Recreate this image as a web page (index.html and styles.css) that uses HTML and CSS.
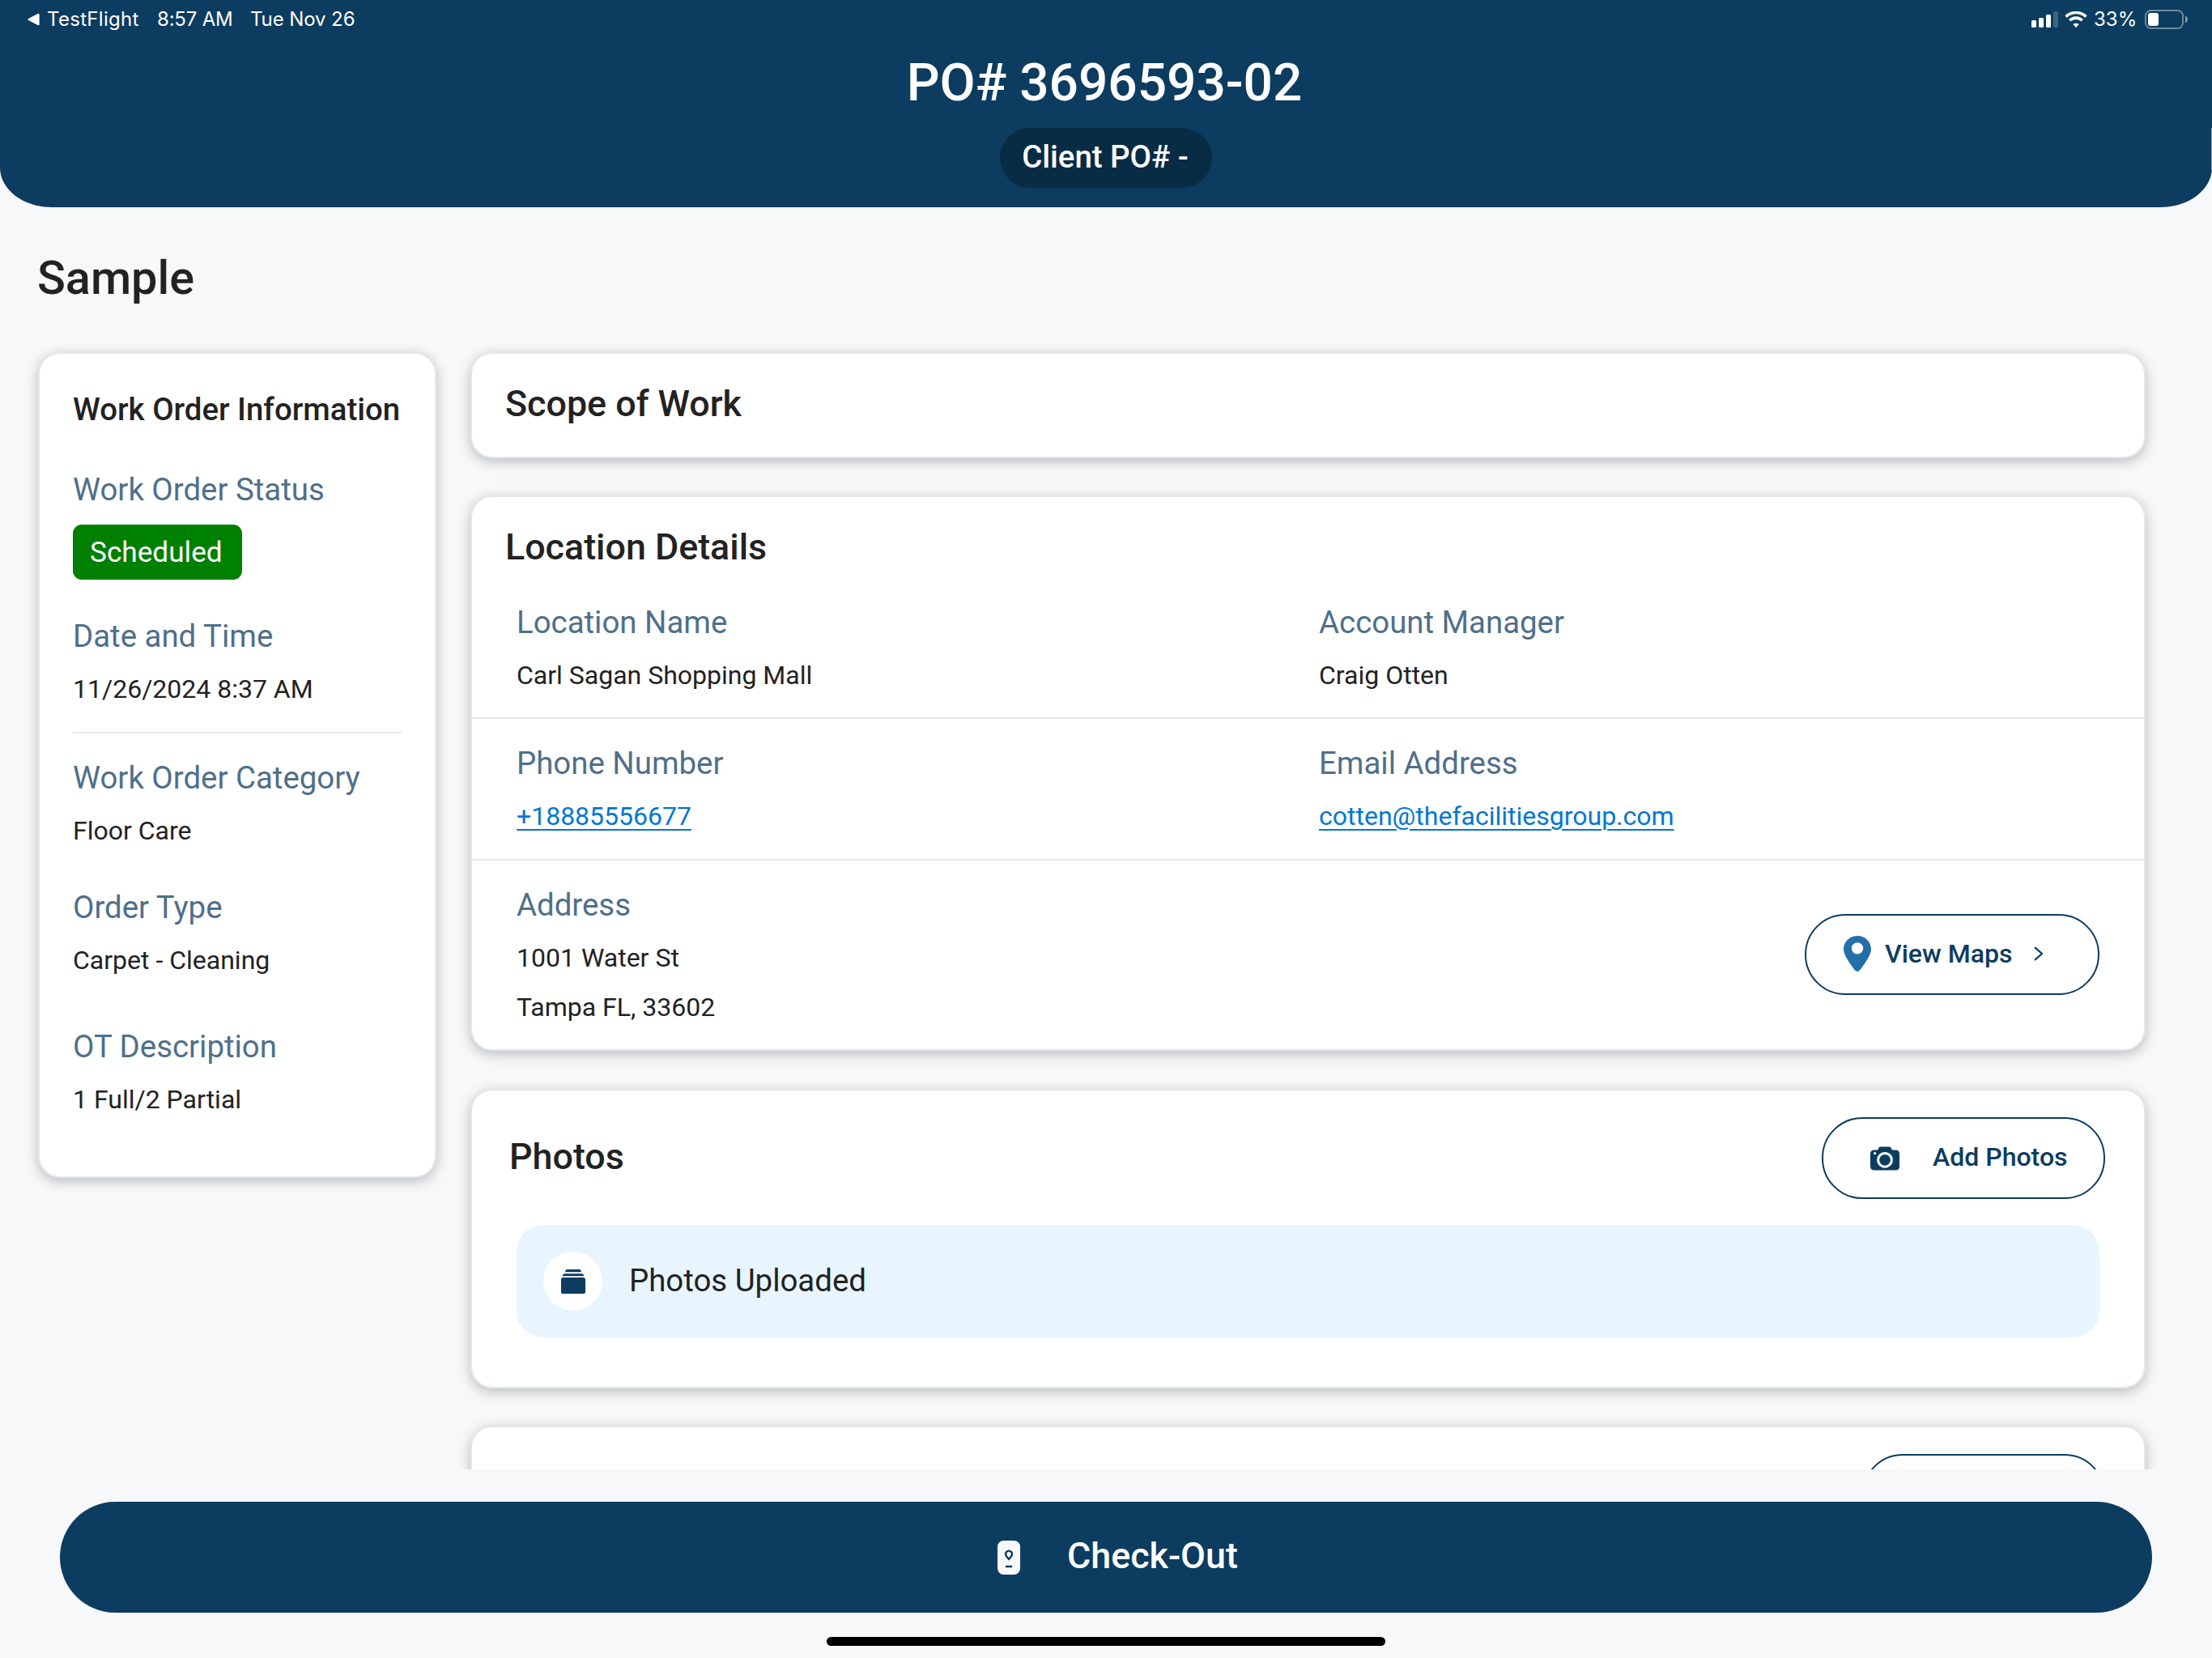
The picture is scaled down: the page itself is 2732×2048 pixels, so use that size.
FILE: index.html
```html
<!DOCTYPE html>
<html lang="en">
<head>
<meta charset="utf-8">
<title>PO# 3696593-02</title>
<link rel="stylesheet" href="styles.css">
</head>
<body>
<div class="app">
  <header class="header">
    <div class="status">
      <div class="status-left">
        <svg class="back" viewBox="0 0 16 16"><path d="M1.200 6.900 13.400.600Q15.600-.200 15.600 2v12q0 2.200-2.200 1.400L1.200 9.100Q-.4 8 1.200 6.900Z" fill="#fff"/></svg>
        <span class="st st-app">TestFlight</span>
        <span class="st st-time">8:57 AM</span>
        <span class="st st-date">Tue Nov 26</span>
      </div>
      <div class="status-right">
        <svg class="signal" viewBox="0 0 33 20" fill="#fff"><rect x="0" y="11" width="6" height="9" rx="1.500"/><rect x="9" y="8" width="6" height="12" rx="1.500"/><rect x="18" y="4" width="6" height="16" rx="1.500"/><rect x="27" y="0" width="6" height="20" rx="1.500" opacity=".2"/></svg>
        <svg class="wifi" viewBox="0 0 28 20" fill="none" stroke="#fff" stroke-width="3.600"><path d="M1.600 6.600a17.800 17.800 0 0 1 24.800 0"/><path d="M6.300 11.300a11 11 0 0 1 15.400 0"/><path d="M14 20l-3.700-3.900a5.400 5.400 0 0 1 7.400 0Z" fill="#fff" stroke="none"/></svg>
        <span class="st st-pct">33%</span>
        <svg class="battery" viewBox="0 0 54 24"><rect x="1" y="1" width="46" height="22" rx="6.500" fill="none" stroke="#fff" stroke-opacity=".4" stroke-width="2"/><rect x="4" y="4" width="13" height="16" rx="3" fill="#fff"/><path d="M50 7.500q3 1.500 3 4.500t-3 4.500Z" fill="#fff" opacity=".5"/></svg>
      </div>
    </div>
    <h1 class="title">PO# 3696593-02</h1>
    <div class="pill"><span>Client PO# -</span></div>
  </header>
  <main class="scroll">
    <h2 class="page-name">Sample</h2>
    <div class="columns">
      <aside class="card info">
        <h3 class="info-title">Work Order Information</h3>
        <div class="field status-field">
          <div class="label">Work Order Status</div>
          <div class="badge">Scheduled</div>
        </div>
        <div class="field date-field">
          <div class="label">Date and Time</div>
          <div class="value">11/26/2024 8:37 AM</div>
        </div>
        <div class="field category-field">
          <div class="label">Work Order Category</div>
          <div class="value">Floor Care</div>
        </div>
        <div class="field type-field">
          <div class="label">Order Type</div>
          <div class="value">Carpet - Cleaning</div>
        </div>
        <div class="field desc-field">
          <div class="label">OT Description</div>
          <div class="value">1 Full/2 Partial</div>
        </div>
      </aside>
      <div class="details">
        <section class="card scope"><h3 class="heading">Scope of Work</h3></section>
        <section class="card location">
          <h3 class="heading">Location Details</h3>
          <div class="row">
            <div class="field"><div class="label">Location Name</div><div class="value">Carl Sagan Shopping Mall</div></div>
            <div class="field"><div class="label">Account Manager</div><div class="value">Craig Otten</div></div>
          </div>
          <div class="row contact">
            <div class="field"><div class="label">Phone Number</div><div class="value"><a class="link">+18885556677</a></div></div>
            <div class="field"><div class="label">Email Address</div><div class="value"><a class="link">cotten@thefacilitiesgroup.com</a></div></div>
          </div>
          <div class="row address">
            <div class="field"><div class="label">Address</div><div class="value">1001 Water St</div><div class="value">Tampa FL, 33602</div></div>
            <div class="btn maps">
              <svg class="pin" viewBox="0 0 34 44"><path fill="#236fa8" fill-rule="evenodd" d="M17 0C7.500 0 0 7.400 0 16.500 0 24 8.500 35 13.800 42.300Q17 45.700 20.200 42.300C25.500 35 34 24 34 16.500 34 7.400 26.500 0 17 0ZM17 8.200a7.200 7.200 0 1 1 0 14.400 7.200 7.200 0 0 1 0-14.400Z"/></svg>
              <span>View Maps</span>
              <svg class="chev" viewBox="0 0 12 18" fill="none" stroke="#0c3c60" stroke-width="2.300" stroke-linecap="round" stroke-linejoin="round"><path d="M1.700 1.700 10 9l-8.300 7.300"/></svg>
            </div>
          </div>
        </section>
        <section class="card photos">
          <div class="photos-head">
            <h3 class="heading">Photos</h3>
            <div class="btn add">
              <svg class="camera" viewBox="0 0 36 30"><path fill="#0c3c60" d="M12.500.4h11q1.400 0 2 1.300l1 2q.5.900 1.500.900h3Q36 4.600 36 9.600v15q0 5-5 5H5q-5 0-5-5v-15q0-5 5-5h3q1.200 0 1.600-.9l.9-2q.6-1.300 2-1.300Z"/><circle cx="18" cy="16.800" r="8.400" fill="none" stroke="#fff" stroke-width="3"/><circle cx="5.600" cy="8.600" r="1.700" fill="#fff"/></svg>
              <span>Add Photos</span>
            </div>
          </div>
          <div class="uploaded">
            <div class="circle"><svg class="albums" viewBox="0 0 30 30" fill="#0c3c60"><path d="M7.500 0h15q2 0 2.500 3.200H5Q5.500 0 7.500 0Z"/><path d="M4 5.200h22q1.800 0 2.300 3H1.700q.5-3 2.300-3Z"/><rect x="0" y="10" width="30" height="20" rx="2.600"/></svg></div>
            <span>Photos Uploaded</span>
          </div>
        </section>
        <section class="card next"><div class="btn"></div></section>
      </div>
    </div>
  </main>
  <footer class="footer">
    <div class="checkout">
      <svg class="phone" viewBox="0 0 28 42"><rect width="28" height="42" rx="7.500" fill="#f7f8fa"/><path d="M14 12.600a4 4 0 0 1 4 4.100c0 2-2.200 4.300-4 6.200-1.800-1.900-4-4.200-4-6.200a4 4 0 0 1 4-4.100Z" fill="none" stroke="#0c3c60" stroke-width="2.400"/><path d="M11 32h6" stroke="#0c3c60" stroke-width="2.600" stroke-linecap="round"/></svg>
      <span>Check-Out</span>
    </div>
    <div class="home"></div>
  </footer>
</div>
</body>
</html>
```
FILE: styles.css
```css
* { box-sizing: border-box; }
body { margin: 0; background: #f7f8fa; font-family: Roboto, sans-serif; color: #222; }
h1, h2, h3 { margin: 0; font-weight: 500; }
svg { display: block; flex: none; }
.app { width: 2732px; height: 2048px; display: flex; flex-direction: column; overflow: hidden; }

.header { position: relative; height: 256px; flex: none; background: #0c3c60; color: #fff; border-radius: 0 0 64px 64px / 0 0 49px 49px; display: flex; flex-direction: column; align-items: center; }
.header::after { content: ""; position: absolute; right: 0; top: 158px; width: 1px; height: 52px; background: #8fa4b4; }
.status { width: 100%; height: 48px; padding: 0 29px 0 34px; display: flex; justify-content: space-between; align-items: center; }
.status-left, .status-right { display: flex; align-items: center; }
.st { font: 400 24px/30px Inter, sans-serif; white-space: pre; }
.back { width: 15px; height: 16px; margin-right: 9px; }
.st-app { width: 136px; letter-spacing: .3px; }
.st-time { width: 115px; letter-spacing: -.2px; }
.st-date { letter-spacing: -.1px; }
.signal { width: 33px; height: 20px; margin-right: 8px; }
.wifi { width: 28px; height: 20px; margin-right: 8px; }
.st-pct { width: 63px; }
.battery { width: 54px; height: 24px; }
.title { font-size: 64px; line-height: 76px; margin: 17px 4px 0 0; }
.pill { width: 262px; height: 74px; margin-top: 17px; padding: 0 2px 2px 0; border-radius: 37px; background: #092c45; display: flex; align-items: center; justify-content: center; font-weight: 500; font-size: 38.4px; line-height: 48px; }

.scroll { height: 1559px; flex: none; overflow: hidden; padding: 0 82px 0 47px; }
.page-name { font-size: 57.6px; line-height: 66px; margin: 55px 0 58px -1px; }
.columns { display: flex; align-items: flex-start; justify-content: space-between; }
.card { background: #fff; border: 2px solid #e6e7e8; border-radius: 27px; box-shadow: 0 4px 16px rgba(0,0,0,.25); }
.info { width: 492px; height: 1020px; padding: 45px 41px 0; }
.info-title { font-size: 38.4px; line-height: 48px; white-space: nowrap; }
.label { font-size: 38.4px; line-height: 48px; color: #4f6f8a; white-space: nowrap; }
.value { font-size: 32px; line-height: 40px; margin-top: 21px; white-space: nowrap; }
.status-field { margin-top: 51px; }
.badge { width: 209px; height: 68px; margin-top: 19px; padding-left: 21px; border-radius: 11px; background: #008000; color: #fff; font-size: 35.2px; line-height: 68px; }
.date-field { margin-top: 46px; padding-bottom: 33px; border-bottom: 2px solid #e5e9ed; }
.category-field { margin-top: 31px; }
.type-field { margin-top: 51px; }
.desc-field { margin-top: 63px; }

.details { width: 2069px; display: flex; flex-direction: column; }
.heading { font-size: 44.8px; line-height: 52px; }
.scope { height: 131px; padding: 36px 41px 0; margin-bottom: 46px; }
.location { height: 686px; padding-top: 36px; margin-bottom: 47px; }
.location .heading { margin: 0 41px 12px; }
.row { display: grid; grid-template-columns: 991px 1fr; padding: 31px 55px 32px; border-bottom: 2px solid #e5e9ed; }
.row:last-child { border-bottom: 0; }
.contact { padding-bottom: 33px; }
.address { align-items: center; }
.link { color: #0177d1; text-decoration: underline; text-decoration-thickness: 2px; text-underline-offset: 5px; }
.btn { border: 2px solid #0c3c60; border-radius: 50px; height: 100px; display: flex; align-items: center; color: #0c3c60; font-weight: 500; font-size: 32px; line-height: 40px; white-space: nowrap; }
.maps { width: 364px; justify-self: end; padding: 0 0 2px 46px; }
.pin { width: 34px; height: 44px; margin-right: 17px; }
.maps span { width: 184px; }
.chev { width: 12px; height: 18px; }
.photos { height: 370px; padding-top: 33px; margin-bottom: 46px; }
.photos-head { display: flex; justify-content: space-between; align-items: center; padding: 0 48px 0 46px; }
.photos-head .heading { margin-bottom: 3px; }
.add { width: 350px; height: 101px; padding-left: 58px; }
.add span { margin-bottom: 3px; }
.camera { width: 36px; height: 30px; margin-right: 41px; }
.uploaded { height: 139px; margin: 32px 55px 0; border-radius: 33px; background: #e8f5ff; padding-left: 33px; display: flex; align-items: center; font-size: 38.4px; line-height: 48px; }
.uploaded span { margin-bottom: 2px; }
.circle { width: 73px; height: 73px; border-radius: 50%; background: #fff; display: flex; align-items: center; justify-content: center; margin-right: 33px; }
.albums { width: 30px; height: 30px; }
.next { height: 370px; padding: 33px 48px 0; }
.next .btn { width: 300px; margin-left: auto; }

.footer { flex: 1; padding-top: 40px; display: flex; flex-direction: column; align-items: center; }
.checkout { width: 2584px; height: 137px; border-radius: 69px; background: #0c3c60; color: #fff; display: flex; align-items: center; padding-left: 1158px; font-weight: 500; font-size: 44.8px; line-height: 52px; }
.checkout span { margin-bottom: 3px; }
.phone { width: 28px; height: 42px; margin-right: 58px; }
.home { width: 690px; height: 11px; margin-top: 30px; border-radius: 6px; background: #000; }
```
